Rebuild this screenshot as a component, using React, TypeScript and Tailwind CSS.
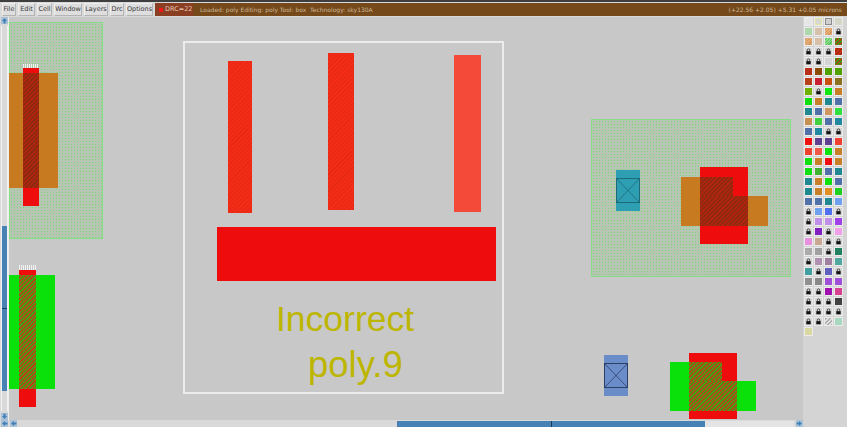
import React from 'react';

const menus = [
  { label: 'File', w: 'w-[14px]' },
  { label: 'Edit', w: 'w-[17px]' },
  { label: 'Cell', w: 'w-[15px]' },
  { label: 'Window', w: 'w-[28px]' },
  { label: 'Layers', w: 'w-[24px]' },
  { label: 'Drc', w: 'w-[14px]' },
  { label: 'Options', w: 'w-[27px]' },
];

// palette swatches, 4 per row, 'lock' draws the padlock tile
const lock = 'lock';
const hatchOrange = 'bg-[repeating-linear-gradient(135deg,#e8b078_0,#e8b078_1px,#d09860_1px,#d09860_2px)]';
const hatchGreen = 'bg-[repeating-linear-gradient(135deg,#88e088_0,#88e088_1px,#60c060_1px,#60c060_2px)]';
const hatchMoss = 'bg-[repeating-linear-gradient(135deg,#3f9a10_0,#3f9a10_1.5px,#a04a18_1.5px,#a04a18_3px)]';
const hatchRed = 'bg-[repeating-linear-gradient(135deg,#d03018_0,#d03018_1.5px,#a02c10_1.5px,#a02c10_3px)]';
const hatchGray = 'bg-[repeating-linear-gradient(135deg,#b0b0b0_0,#b0b0b0_1.5px,#e0e0e0_1.5px,#e0e0e0_3px)]';

const swatches: string[] = [
  'bg-[#e6e6e6]', 'bg-[#d8d8d0] border border-[#e4e4a8]', 'bg-[#cfcfcf] border border-[#8c8c8c]', 'bg-[#d4d6c8]',
  'bg-[#acd8ac]', 'bg-[#d6c0aa]', hatchOrange, lock,
  hatchOrange, 'bg-[#d6c0aa]', hatchGreen, hatchMoss,
  lock, lock, lock, hatchRed,
  lock, lock, 'bg-[#d4d4d4]', hatchMoss,
  'bg-[#b83018]', 'bg-[#8a4a08]', 'bg-[#50a000]', 'bg-[#50a000]',
  'bg-[#b84018]', 'bg-[#c82030]', 'bg-[#c85010]', 'bg-[#8a7020]',
  'bg-[#70b000]', lock, 'bg-[#10e810]', 'bg-[#c88028]',
  'bg-[#10e010]', 'bg-[#c88028]', 'bg-[#208890]', 'bg-[#5070a8]',
  'bg-[#208890]', 'bg-[#5070a8]', 'bg-[#d09860]', 'bg-[#30e040]',
  'bg-[#c89050]', 'bg-[#40d040]', 'bg-[#5070a8]', 'bg-[#2088a0]',
  'bg-[#5070a8]', 'bg-[#2088a0]', lock, lock,
  'bg-[#f01010]', 'bg-[#604090]', 'bg-[#604090]', 'bg-[#f04030]',
  'bg-[#f04030]', 'bg-[#f05848]', 'bg-[#10e010]', 'bg-[#c88028]',
  'bg-[#10e010]', 'bg-[#c88028]', 'bg-[#f01010]', 'bg-[#c88028]',
  'bg-[#10e010]', 'bg-[#40b030]', 'bg-[#5070a8]', 'bg-[#208890]',
  'bg-[#208890]', 'bg-[#c88028]', 'bg-[#10e010]', 'bg-[#5070a8]',
  'bg-[#208890]', 'bg-[#c88028]', 'bg-[#e09020]', 'bg-[#20d020]',
  'bg-[#5070a8]', 'bg-[#5070a8]', 'bg-[#208890]', 'bg-[#70a0f0]',
  lock, 'bg-[#70a0f0]', 'bg-[#5070f0]', lock,
  lock, 'bg-[#c090e8]', 'bg-[#c090e8]', 'bg-[#a040e8]',
  lock, 'bg-[#8020c0]', lock, 'bg-[#f0a0e8]',
  'bg-[#e890e0]', 'bg-[#c8a890]', lock, lock,
  'bg-[#aaaaaa]', 'bg-[#a0a0a0]', lock, 'bg-[#208060]',
  lock, 'bg-[#b090b0]', 'bg-[#a080a0]', 'bg-[#50a8a0]',
  'bg-[#40a0a0]', lock, 'bg-[#6060c0]', lock,
  'bg-[#909090]', 'bg-[#888888]', 'bg-[#a050d8]', 'bg-[#a050d8]',
  lock, lock, 'bg-[#a010b0]', 'bg-[#d84090]',
  lock, lock, lock, 'bg-[#404040]',
  lock, lock, lock, lock,
  lock, lock, hatchGray, 'bg-[#a8d8c0]',
  'bg-[#d8d8a0]',
];

const dots = 'bg-[#b6c6b2] bg-[radial-gradient(#7cd67c_1px,transparent_1px)] bg-[length:3px_3px] border border-[#86de86]';
const overlapRed = 'bg-[repeating-linear-gradient(135deg,#b02410_0,#b02410_1.5px,#8c2a10_1.5px,#8c2a10_3px)]';
const overlapGreen = 'bg-[repeating-linear-gradient(135deg,#4c9810_0,#4c9810_1.5px,#b0481a_1.5px,#b0481a_3px)]';
const polyHatch = 'bg-[repeating-linear-gradient(135deg,#f62c18_0,#f62c18_1.5px,#e62a14_1.5px,#e62a14_3px)]';
const stipple = 'bg-[repeating-linear-gradient(90deg,#f2f2f2_0,#f2f2f2_1px,transparent_1px,transparent_2px)]';

function LockTile() {
  return (
    <svg viewBox="0 0 8 8" className="w-full h-full block">
      <rect width="8" height="8" fill="#d4d4d4" />
      <path d="M2.6 4V2.4a1.4 1.4 0 0 1 2.8 0V4" fill="none" stroke="#333" strokeWidth="0.9" />
      <rect x="1.5" y="3.6" width="5" height="3.6" fill="#111" />
    </svg>
  );
}

function Contact({ className, stroke }: { className: string; stroke: string }) {
  return (
    <svg viewBox="0 0 24 25" className={className}>
      <rect x="0.5" y="0.5" width="23" height="24" fill="none" stroke={stroke} />
      <path d="M0.5 0.5L23.5 24.5M23.5 0.5L0.5 24.5" stroke={stroke} strokeWidth="0.8" />
    </svg>
  );
}

function Arrow({ d }: { d: string }) {
  return (
    <svg viewBox="0 0 7 7" className="w-[7px] h-[7px] shrink-0">
      <rect width="7" height="7" fill="#a9c1d6" />
      <path d={d} fill="#3f7fb5" />
    </svg>
  );
}

export default function App() {
  return (
    <div className="w-[847px] h-[427px] overflow-hidden flex flex-col bg-[#d9d9d9] font-['DejaVu_Sans',sans-serif]">
      {/* Title strip + menu */}
      <div className="h-[2px] bg-[#3e3e3e]" />
      <div className="h-[15px] flex items-stretch pl-[2px] py-[1px] bg-[#d9d9d9]">
        <div className="flex gap-[2px]">
          {menus.map(m => (
            <div
              key={m.label}
              className={`${m.w} flex items-center justify-center text-[6.5px] leading-none text-[#3a3a3a] bg-[#dedede] border border-[#eeeeee] border-b-[#b4b4b4] border-r-[#b4b4b4]`}
            >
              {m.label}
            </div>
          ))}
        </div>
        <div className="ml-[2px] w-[38px] flex items-center gap-[2px] pl-[4px] bg-[#8a3e22] text-[6.5px] text-[#e6c8b8]">
          <span className="w-[4px] h-[4px] bg-[#f01818]" />
          DRC=22
        </div>
        <div className="flex-1 flex items-center justify-between pl-[7px] pr-[5px] bg-[#75491a] text-[6px] text-[#cdb899] whitespace-pre">
          <span>Loaded: poly Editing: poly Tool: box  Technology: sky130A</span>
          <span>(+22.56 +2.05) +5.31 +0.05 microns</span>
        </div>
      </div>

      <div className="flex-1 flex min-h-0">
        <div className="w-[803px] flex flex-col">
          <div className="h-[403px] flex">
            {/* Left scrollbar */}
            <div className="w-[9px] flex flex-col items-center bg-[#d9d9d9] border-r border-[#eeeeee]">
              <Arrow d="M3.5 1L6 4H4.5V6.5H2.5V4H1Z" />
              <div className="flex-1 w-[7px] my-[2px] flex flex-col border-x border-[#f2f2f2]">
                <div className="h-[200px]" />
                <div className="h-[165px] bg-[#4682b4] flex items-center justify-center">
                  <span className="w-[5px] h-[1px] bg-[#1c3a55]" />
                </div>
                <div className="flex-1" />
              </div>
              <Arrow d="M3.5 6L6 3H4.5V0.5H2.5V3H1Z" />
            </div>

            {/* Layout canvas, shapes sit at their drawn coordinates */}
            <div className="flex-1 relative bg-[#c8c8c8] overflow-hidden">
              <div className={`absolute left-0 top-[5px] w-[94px] h-[217px] ${dots}`} />
              <div className={`absolute left-[14px] top-[47px] w-[16px] h-[4px] ${stipple}`} />
              <div className="absolute left-[14px] top-[51px] w-[16px] h-[138px] bg-[#ee0c0c]" />
              <div className="absolute left-0 top-[56px] w-[49px] h-[115px] bg-[#c87a20]" />
              <div className={`absolute left-[14px] top-[56px] w-[16px] h-[115px] ${overlapRed}`} />

              <div className={`absolute left-[10px] top-[248px] w-[17px] h-[5px] ${stipple}`} />
              <div className="absolute left-[10px] top-[253px] w-[17px] h-[137px] bg-[#ee0c0c]" />
              <div className="absolute left-0 top-[258px] w-[46px] h-[114px] bg-[#0ae00a]" />
              <div className={`absolute left-[10px] top-[258px] w-[17px] h-[114px] ${overlapGreen}`} />

              {/* Rule example */}
              <div className="absolute left-[174px] top-[24px] w-[321px] h-[353px] border-2 border-[#ececec]" />
              <div className={`absolute left-[219px] top-[44px] w-[24px] h-[152px] ${polyHatch}`} />
              <div className={`absolute left-[319px] top-[36px] w-[26px] h-[157px] ${polyHatch}`} />
              <div className="absolute left-[445px] top-[38px] w-[27px] h-[157px] bg-[#f44a3a]" />
              <div className="absolute left-[208px] top-[210px] w-[279px] h-[54px] bg-[#ee0c0c]" />
              <div className="absolute left-[267px] top-[281px] text-[35.5px] leading-[42px] font-['Liberation_Sans',sans-serif] text-[#bdb600]">Incorrect</div>
              <div className="absolute left-[299px] top-[327px] text-[36.5px] leading-[42px] font-['Liberation_Sans',sans-serif] text-[#bdb600]">poly.9</div>

              {/* Right device */}
              <div className={`absolute left-[582px] top-[102px] w-[200px] h-[158px] ${dots}`} />
              <div className="absolute left-[607px] top-[153px] w-[24px] h-[41px] bg-[#2e9fb3]" />
              <Contact className="absolute left-[607px] top-[161px] w-[24px] h-[25px]" stroke="#1c6a78" />
              <div className="absolute left-[672px] top-[160px] w-[87px] h-[49px] bg-[#c87a20]" />
              <div className="absolute left-[739px] top-[160px] w-[20px] h-[19px] bg-[#b6c6b2] bg-[radial-gradient(#7cd67c_1px,transparent_1px)] bg-[length:3px_3px]" />
              <div className="absolute left-[691px] top-[150px] w-[48px] h-[77px] bg-[#ee0c0c]" />
              <div className={`absolute left-[691px] top-[160px] w-[33px] h-[19px] ${overlapRed}`} />
              <div className={`absolute left-[691px] top-[179px] w-[48px] h-[30px] ${overlapRed}`} />

              {/* Bottom device */}
              <div className="absolute left-[595px] top-[338px] w-[24px] h-[41px] bg-[#6a8cc8]" />
              <Contact className="absolute left-[595px] top-[346px] w-[24px] h-[25px]" stroke="#2c3f66" />
              <div className="absolute left-[661px] top-[345px] w-[19px] h-[49px] bg-[#0ae00a]" />
              <div className="absolute left-[728px] top-[364px] w-[19px] h-[30px] bg-[#0ae00a]" />
              <div className="absolute left-[680px] top-[336px] w-[48px] h-[66px] bg-[#ee0c0c]" />
              <div className={`absolute left-[680px] top-[345px] w-[33px] h-[19px] ${overlapGreen}`} />
              <div className={`absolute left-[680px] top-[364px] w-[48px] h-[30px] ${overlapGreen}`} />
            </div>
          </div>

          {/* Bottom scrollbar */}
          <div className="flex-1 flex items-center pl-[1px] gap-[2px]">
            <Arrow d="M1 3.5L4 1V2.5H6.5V4.5H4V6Z" />
            <Arrow d="M1 3.5L4 1V2.5H6.5V4.5H4V6Z" />
            <div className="flex-1 h-[6px] flex">
              <div className="w-[378px]" />
              <div className="w-[308px] bg-[#4682b4] flex justify-center">
                <span className="w-[1px] h-full bg-[#1c3a55]" />
              </div>
              <div className="flex-1 bg-[#e4e4e4]" />
            </div>
            <Arrow d="M6 3.5L3 1V2.5H0.5V4.5H3V6Z" />
          </div>
        </div>

        {/* Layer palette */}
        <div className="flex-1 -mt-[1px] bg-[#d4d4d4] grid grid-cols-[repeat(4,10px)] auto-rows-[10px] content-start">
          {swatches.map((s, i) => (
            <div key={i} className="p-[0.5px]">
              <div className="w-full h-full border border-[#ebebeb]">
                {s === lock ? <LockTile /> : <div className={`w-full h-full ${s}`} />}
              </div>
            </div>
          ))}
        </div>
      </div>
    </div>
  );
}
